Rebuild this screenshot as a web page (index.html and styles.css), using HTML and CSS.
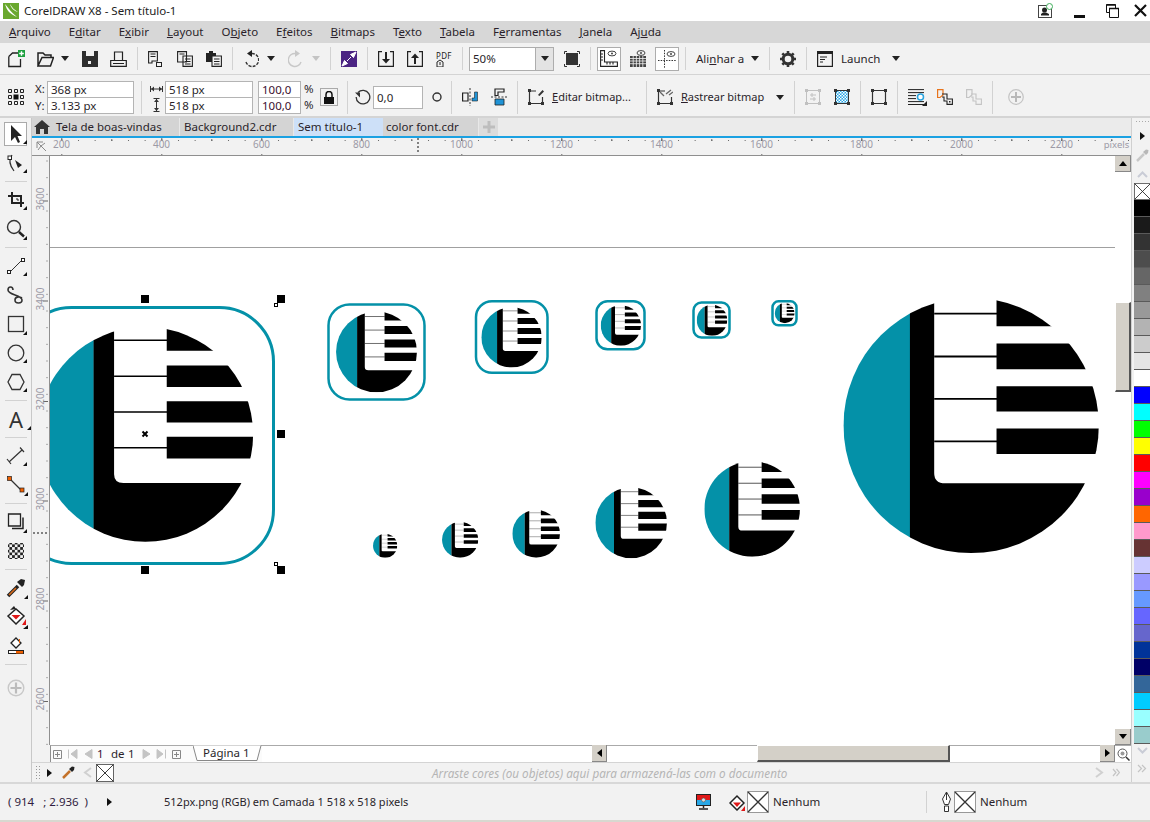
FILE: index.html
```html
<!DOCTYPE html>
<html lang="pt">
<head>
<meta charset="utf-8">
<title>CorelDRAW X8 - Sem título-1</title>
<link rel="stylesheet" href="styles.css">
</head>
<body>
<svg class="defs" width="0" height="0">
  <defs>
    <clipPath id="lc"><circle cx="128" cy="128" r="127.8"/></clipPath>
    <symbol id="logo" viewBox="0 0 256 256" preserveAspectRatio="none">
      <g clip-path="url(#lc)">
        <rect width="67" height="256" fill="#0491a8"/>
        <path d="M66.7 0H91V175.500Q91 185.900 102 185.900H256V256H66.7Z" fill="#000"/>
        <path d="M91 15.900H154M91 58.900H154M91 101.300H154M91 143.900H154" stroke="#000" stroke-width="1.800"/>
        <path d="M153.400 0H256V28.600H153.400ZM153.400 45.900H256V71.600H153.400ZM153.400 88.600H256V113.900H153.400ZM153.400 130.900H256V156.600H153.400Z" fill="#000"/>
      </g>
    </symbol>
    <symbol id="x-box" viewBox="0 0 20 20">
      <rect x=".5" y=".5" width="19" height="19" fill="#fff" stroke="#555"/>
      <path d="M1 1L19 19M19 1L1 19" stroke="#222" stroke-width="1"/>
    </symbol>
    <symbol id="fly" viewBox="0 0 8 5"><path d="M0 0H8L4 5Z" fill="#222"/></symbol>
    <symbol id="flyg" viewBox="0 0 8 5"><path d="M0 0H8L4 5Z" fill="#c4c4c4"/></symbol>
  </defs>
</svg>

<div class="app">
  <header class="titlebar">
    <svg class="app-icon" width="16" height="16" viewBox="0 0 16 16"><rect width="16" height="16" y="0" fill="#6aa82e"/><path d="M2 1C6 6 9 10 14 14C10 12 8 11 6 9C4 7 3 4 2 1ZM7 1C9 4 11 7 15 9C11 8 8 5 7 1Z" fill="#fff"/></svg>
    <span class="title-text">CorelDRAW X8 - Sem título-1</span>
    <div class="win-controls">
      <svg width="15" height="15" viewBox="0 0 15 15"><rect x=".5" y="2.5" width="13" height="12" fill="#fff" stroke="#444"/><circle cx="6.5" cy="7" r="2.5" fill="#222"/><path d="M3 12.5H11V11L8 9.5H5L3 11Z" fill="#222"/><circle cx="11.5" cy="3.5" r="3" fill="#fff" stroke="#3fae5a"/></svg>
      <svg class="m20" width="11" height="15" viewBox="0 0 11 15"><rect y="12" width="11" height="3" fill="#111"/></svg>
      <svg class="m21" width="13" height="15" viewBox="0 0 13 15"><path d="M.5 1.5H9.5V9.5H.5Z" fill="none" stroke="#111"/><path d="M3.5 5.5H12.5V14.5H3.5Z" fill="#fff" stroke="#111"/><path d="M3 5.5H13M.5 2H9.5" stroke="#111" stroke-width="1.6"/></svg>
      <svg class="m15" width="13" height="13" viewBox="0 0 13 13"><path d="M1 1L12 12M12 1L1 12" stroke="#111" stroke-width="2.2"/></svg>
    </div>
  </header>

  <nav class="menubar">
    <span><u>A</u>rquivo</span><span>E<u>d</u>itar</span><span>E<u>x</u>ibir</span><span><u>L</u>ayout</span><span>O<u>b</u>jeto</span><span>E<u>f</u>eitos</span><span><u>B</u>itmaps</span><span>T<u>e</u>xto</span><span><u>T</u>abela</span><span>F<u>e</u>rramentas</span><span><u>J</u>anela</span><span>Aj<u>u</u>da</span>
  </nav>

  <div class="bar toolbar">
    <svg class="m8" width="18" height="18" viewBox="0 0 18 18"><path d="M.8 6.5L4.5 3H10M.8 6.5V16.5H12.5V9" fill="none" stroke="#222" stroke-width="1.3"/><rect x="10" y="0" width="7" height="7" fill="#1d9f3e"/><path d="M13.5 1.2V5.8M11.2 3.5H15.8" stroke="#fff" stroke-width="1.4"/></svg>
    <svg class="m11" width="17" height="16" viewBox="0 0 17 16"><path d="M1 15V2H6L8 4H14V6.5H5L1 15H13.5L16.5 6.5H5" fill="none" stroke="#222" stroke-width="1.5"/></svg>
    <svg class="m7" width="8" height="5"><use href="#fly"/></svg>
    <svg class="m13" width="16" height="16" viewBox="0 0 16 16"><path d="M0 0H16V16H0Z" fill="#2e2e2e"/><rect x="4" y="0" width="8" height="5" fill="#f2f2f2"/><rect x="6" y="10" width="3" height="3" fill="#f2f2f2"/></svg>
    <svg class="m12" width="17" height="16" viewBox="0 0 17 16"><path d="M.7 15.3V9.5H4.5V1H12.5V9.5H16.3V15.3ZM4.5 9.5H12.5M3 12.5H14" fill="none" stroke="#222" stroke-width="1.2"/></svg>
    <i class="sep m10"></i>
    <svg class="m10" width="14" height="16" viewBox="0 0 14 16"><path d="M.6 .6H9.4V10H4V12H.6ZM2.5 3H7.5M2.5 5.5H7.5" fill="none" stroke="#222" stroke-width="1.1"/><rect x="8.5" y="11.5" width="5" height="4" fill="none" stroke="#222"/></svg>
    <svg class="m15" width="16" height="16" viewBox="0 0 16 16"><path d="M.6 .6H9.5V11H.6ZM6 5H15.4V15.4H6ZM2.5 3H7.5M8 8H13.5M8 10.5H13.5M8 13H13.5" fill="#f2f2f2" stroke="#222" stroke-width="1.1"/></svg>
    <svg class="m13" width="16" height="16" viewBox="0 0 16 16"><path d="M0 2H3V0H7V2H10V11H0Z" fill="#222"/><path d="M6 5H15.4V15.4H6ZM8 8H13.5M8 10.5H13.5M8 13H13.5" fill="#f2f2f2" stroke="#222" stroke-width="1.1"/></svg>
    <i class="sep m10"></i>
    <svg class="m10" width="16" height="18" viewBox="0 0 16 18"><path d="M3 12A6.5 6.5 0 1 0 8.5 3.5" fill="none" stroke="#333" stroke-width="1.4" stroke-dasharray="3 1.2"/><path d="M9 0V7L4 3.5Z" fill="#222"/></svg>
    <svg class="m8" width="8" height="5"><use href="#fly"/></svg>
    <svg class="m13" width="16" height="18" viewBox="0 0 16 18"><path d="M13 12A6.5 6.5 0 1 1 7.5 3.5" fill="none" stroke="#c8c8c8" stroke-width="1.4"/><path d="M7 0V7L12 3.5Z" fill="#c8c8c8"/></svg>
    <svg class="m8" width="8" height="5"><use href="#flyg"/></svg>
    <i class="sep m10"></i>
    <svg class="m10" width="16" height="16" viewBox="0 0 16 16"><rect width="16" height="16" fill="#4b2483"/><path d="M15 1L9.5 3.5L12.5 6.5ZM1 15L6.5 12.5L3.5 9.5ZM6 10L10 6" stroke="#fff" fill="#fff"/></svg>
    <i class="sep m10"></i>
    <svg class="m10" width="16" height="16" viewBox="0 0 16 16"><path d="M4 .6H.6V15.4H15.4V.6H12" fill="none" stroke="#222" stroke-width="1.2"/><path d="M8 1V8" stroke="#222" stroke-width="2"/><path d="M4 8H12L8 12.5Z" fill="#222"/></svg>
    <svg class="m13" width="16" height="16" viewBox="0 0 16 16"><path d="M4 .6H.6V15.4H15.4V.6H12" fill="none" stroke="#222" stroke-width="1.2"/><path d="M8 6V13" stroke="#222" stroke-width="2"/><path d="M4 7H12L8 2.5Z" fill="#222"/></svg>
    <svg class="m13" width="17" height="16" viewBox="0 0 17 16"><text class="pdf" x="0" y="8">PDF</text><path d="M1 16V11L4 9L7 11V16ZM4 11V14" fill="none" stroke="#222"/></svg>
    <i class="sep m9"></i>
    <div class="combo m6"><span class="combo-text">50%</span><span class="combo-btn"><svg width="8" height="5"><use href="#fly"/></svg></span></div>
    <svg class="m10" width="16" height="16" viewBox="0 0 16 16"><rect x="2" y="2" width="12" height="12" fill="#333"/><path d="M.5 3V.5H3M13 .5H15.5V3M15.5 13V15.5H13M3 15.5H.5V13" fill="none" stroke="#333"/></svg>
    <i class="sep m10"></i>
    <div class="toggle m6"><svg width="18" height="17" viewBox="0 0 18 17"><path d="M.6 .6H4.5V12H17.4V16.4H.6ZM.6 4H3M.6 7H3M.6 10H3M7 12V14.5M10 12V14.5M13 12V14.5" fill="none" stroke="#222" stroke-width="1.1"/><ellipse cx="12" cy="3.5" rx="4" ry="2.4" fill="none" stroke="#444"/><circle cx="12" cy="3.5" r="1" fill="#444"/></svg></div>
    <svg class="m9" width="16" height="17" viewBox="0 0 16 17"><path d="M0 6H16V17H0Z" fill="#444"/><path d="M0 8.5H16M0 11H16M0 13.7H16M3.2 6V17M6.4 6V17M9.6 6V17M12.8 6V17" stroke="#f2f2f2" stroke-width=".8"/><ellipse cx="11" cy="3" rx="4" ry="2.4" fill="none" stroke="#444"/><circle cx="11" cy="3" r="1" fill="#444"/></svg>
    <div class="toggle m9"><svg width="18" height="18" viewBox="0 0 18 18"><path d="M6.5 0V18M0 10.5H18" stroke="#333" stroke-dasharray="1.5 1.2"/><ellipse cx="13" cy="4" rx="4" ry="2.4" fill="none" stroke="#444"/><circle cx="13" cy="4" r="1" fill="#444"/></svg></div>
    <i class="sep m6"></i>
    <span class="label m10 w47">Ali<u>n</u>har a</span>
    <svg class="m8" width="8" height="5"><use href="#fly"/></svg>
    <i class="sep m10"></i>
    <svg class="m10" width="16" height="16" viewBox="0 0 16 16"><circle cx="8" cy="8" r="4.8" fill="none" stroke="#333" stroke-width="3"/><path d="M8 0V16M0 8H16M2.3 2.3L13.7 13.7M13.7 2.3L2.3 13.7" stroke="#333" stroke-width="2.6" stroke-dasharray="2.6 10.8 2.6 0"/></svg>
    <i class="sep m10"></i>
    <svg class="m10" width="16" height="16" viewBox="0 0 16 16"><rect x=".6" y=".6" width="14.8" height="14.8" fill="none" stroke="#222" stroke-width="1.2"/><rect y="0" width="16" height="3" fill="#222"/><path d="M3 6H10M3 8.5H8M3 11H6" stroke="#222"/></svg>
    <span class="label m8 w39">Launch</span>
    <svg class="m12" width="8" height="5"><use href="#fly"/></svg>
  </div>

  <div class="bar propbar">
    <svg class="m8" width="16" height="16" viewBox="0 0 16 16"><path d="M.5 .5H3.500V3.500H.5ZM6.500 .5H9.500V3.500H6.500ZM12.500 .5H15.500V3.500H12.500ZM.5 6.500H3.500V9.500H.5ZM12.500 6.500H15.500V9.500H12.500ZM.5 12.500H3.500V15.500H.5ZM6.500 12.500H9.500V15.500H6.500ZM12.500 12.500H15.500V15.500H12.500Z" fill="none" stroke="#222"/><rect x="5.500" y="5.500" width="5" height="5" fill="#111"/></svg>
    <div class="stack m11">
      <div class="field-row"><label class="axis">X:</label><span class="field w87">368 px</span></div>
      <div class="field-row"><label class="axis">Y:</label><span class="field w87">3.133 px</span></div>
    </div>
    <i class="sep tall m7"></i>
    <div class="stack icons m8">
      <svg width="13" height="16" viewBox="0 0 13 16"><path d="M.5 5V11M12.500 5V11M1 8H12" stroke="#333"/><path d="M1 8L4 5.500V10.500ZM12 8L9 5.500V10.500Z" fill="#333"/></svg>
      <svg width="13" height="16" viewBox="0 0 13 16"><path d="M3.500 1.500H9.500M3.500 14.500H9.500M6.500 2V14" stroke="#333"/><path d="M6.500 2L4 5H9ZM6.500 14L4 11H9Z" fill="#333"/></svg>
    </div>
    <div class="stack m2"><span class="field w88">518 px</span><span class="field w88">518 px</span></div>
    <div class="stack m5"><span class="field w43 num">100,0</span><span class="field w43 num">100,0</span></div>
    <div class="stack pct m3"><span>%</span><span>%</span></div>
    <span class="lock m6"><svg width="12" height="13" viewBox="0 0 12 13"><path d="M3 6V3.500A3 3 0 0 1 9 3.500V6" fill="none" stroke="#111" stroke-width="1.500"/><rect x="1" y="6" width="10" height="7" fill="#111"/></svg></span>
    <i class="sep tall m9"></i>
    <svg class="m7" width="16" height="16" viewBox="0 0 16 16"><path d="M3 3.500A6.800 6.800 0 1 1 1.200 8" fill="none" stroke="#333" stroke-width="1.300"/><path d="M0 3.500H5V8.500Z" fill="#333"/></svg>
    <span class="field rot m2">0,0</span>
    <svg class="m8" width="12" height="12" viewBox="0 0 12 12"><circle cx="6" cy="6" r="4" fill="none" stroke="#333" stroke-width="1.400"/></svg>
    <i class="sep tall m8"></i>
    <svg class="m10" width="16" height="18" viewBox="0 0 16 18"><path d="M8 0V18" stroke="#333" stroke-dasharray="2 1.500"/><path d="M.6 5H6V13H.6Z" fill="none" stroke="#222" stroke-width="1.200"/><path d="M10 13H15.500V4H12.500V10H10Z" fill="#1f93d6" stroke="#222" stroke-width=".6"/></svg>
    <svg class="m13" width="16" height="18" viewBox="0 0 16 18"><path d="M0 9H16" stroke="#333" stroke-dasharray="2 1.500"/><path d="M4 1H13V4H7V7.500H4Z" fill="none" stroke="#222" stroke-width="1.200"/><path d="M4 11V17H13V11Z" fill="#1f93d6" stroke="#222" stroke-width=".8"/></svg>
    <i class="sep tall m10"></i>
    <svg class="m10" width="16" height="16" viewBox="0 0 16 16"><path d="M1.500 2V14.500H14.500V8M1.500 2H8" fill="none" stroke="#333" stroke-width="1.200"/><path d="M0 0H3V3H0ZM0 13H3V16H0ZM13 13H16V16H13Z" fill="#333"/><path d="M10 6L14.500 1L16 2.500L11.500 7Z" fill="#333"/></svg>
    <span class="label small m8 w80"><u>E</u>ditar bitmap...</span>
    <i class="sep tall m14"></i>
    <svg class="m10" width="16" height="16" viewBox="0 0 16 16"><path d="M1.500 2V14.500H14.500V8M1.500 2H8" fill="none" stroke="#333" stroke-width="1.200"/><path d="M0 0H3V3H0ZM0 13H3V16H0ZM13 13H16V16H13Z" fill="#333"/><path d="M3 3L7 7M9 5L14 1M12 6L16 3" stroke="#666" stroke-width="1.300"/></svg>
    <span class="label small m8 w82"><u>R</u>astrear bitmap</span>
    <svg class="m13" width="8" height="5"><use href="#fly"/></svg>
    <i class="sep tall m10"></i>
    <svg class="m10" width="16" height="16" viewBox="0 0 16 16"><path d="M1.500 1.500H14.500V14.500H1.500Z" fill="none" stroke="#c0c0c0"/><path d="M0 0H3V3H0ZM13 0H16V3H13ZM0 13H3V16H0ZM13 13H16V16H13Z" fill="#c0c0c0"/><path d="M5 6H11M5 10H11M7 4V8M9 8V12" stroke="#c0c0c0"/></svg>
    <svg class="m13" width="16" height="16" viewBox="0 0 16 16"><defs><pattern id="chk" width="3" height="3" patternUnits="userSpaceOnUse"><rect width="3" height="3" fill="#28a8e8"/><rect width="1.500" height="1.500" fill="#fff"/><rect x="1.500" y="1.500" width="1.500" height="1.500" fill="#fff"/></pattern></defs><rect x="1.500" y="1.500" width="13" height="13" fill="url(#chk)" stroke="#333"/><path d="M0 0H3V3H0ZM13 0H16V3H13ZM0 13H3V16H0ZM13 13H16V16H13Z" fill="#333"/></svg>
    <i class="sep tall m10"></i>
    <svg class="m10" width="16" height="16" viewBox="0 0 16 16"><path d="M1.500 1.500H14.500V14.500H1.500Z" fill="none" stroke="#333" stroke-width="1.200"/><path d="M0 0H3V3H0ZM13 0H16V3H13ZM0 13H3V16H0ZM13 13H16V16H13Z" fill="#333"/></svg>
    <i class="sep tall m10"></i>
    <svg class="m10" width="19" height="17" viewBox="0 0 19 17"><path d="M0 .6H16M0 3.600H16M0 6.600H8M0 9.600H8M0 12.600H16M0 15.500H16" stroke="#222"/><circle cx="12.500" cy="8" r="3" fill="#fff" stroke="#2aa5e0" stroke-width="1.500"/><path d="M19 12V17H14Z" fill="#222"/></svg>
    <svg class="m10" width="16" height="16" viewBox="0 0 16 16"><path d="M.6 .6H6V6L3 8.500H.6Z" fill="none" stroke="#e8741c" stroke-width="1.200"/><path d="M5 5H10V10H15.400V15.400H10V12H7V8H5" fill="none" stroke="#222" stroke-width="1.100"/><rect x="12" y="12" width="1.500" height="1.500" fill="#222"/></svg>
    <svg class="m13" width="16" height="16" viewBox="0 0 16 16"><path d="M.6 .6H6V6L3 8.500H.6Z" fill="none" stroke="#c4c4c4" stroke-width="1.200"/><path d="M5 5H10V10H15.400V15.400H10V12H7V8H5" fill="none" stroke="#c4c4c4" stroke-width="1.100"/></svg>
    <i class="sep tall m10"></i>
    <svg class="m15" width="16" height="16" viewBox="0 0 16 16"><circle cx="8" cy="8" r="7.300" fill="none" stroke="#c4c4c4" stroke-width="1.200"/><path d="M8 3V13M3 8H13" stroke="#b8b8b8" stroke-width="2"/></svg>
  </div>

  <div class="workspace">
    <aside class="toolbox">
      <div class="tool selected"><svg width="22" height="22" viewBox="1 1 22 22"><path d="M7 3V19L11 15L14 21L16 20L13.500 14H18Z" fill="#222"/><path d="M19 22H23V18Z" fill="#111"/></svg></div>
      <div class="tool"><svg width="24" height="24" viewBox="0 0 24 24"><path d="M8 4Q3 11 10 20" fill="none" stroke="#333" stroke-width="1.200"/><rect x="4" y="5" width="3.500" height="3.500" fill="#fff" stroke="#222"/><path d="M11 9L18 14L14 17Z" fill="#222"/><path d="M19 22H23V18Z" fill="#111"/></svg></div>
      <i class="hsep"></i>
      <div class="tool"><svg width="24" height="24" viewBox="0 0 24 24"><path d="M4 8H17V19M8 4V15H20" fill="none" stroke="#222" stroke-width="2"/><path d="M12 11H14V13" stroke="#222" fill="none"/><path d="M19 22H23V18Z" fill="#111"/></svg></div>
      <div class="tool"><svg width="24" height="24" viewBox="0 0 24 24"><circle cx="10" cy="10" r="6.500" fill="none" stroke="#333" stroke-width="1.400"/><path d="M15 15L20 19.500" stroke="#222" stroke-width="2.400"/><path d="M19 23H23V19Z" fill="#111"/></svg></div>
      <i class="hsep"></i>
      <div class="tool"><svg width="24" height="24" viewBox="0 0 24 24"><path d="M6 18L18 6" stroke="#333"/><rect x="3.500" y="16.500" width="3" height="3" fill="#fff" stroke="#222"/><rect x="17.500" y="4.500" width="3" height="3" fill="#fff" stroke="#222"/><path d="M19 22H23V18Z" fill="#111"/></svg></div>
      <div class="tool"><svg width="24" height="24" viewBox="0 0 24 24"><path d="M9 7C9 3 4 3 4 7C4 12 18 12 18 17C18 21 11 21 11 17C11 14 15 13 18 15" fill="none" stroke="#333" stroke-width="1.600"/></svg></div>
      <div class="tool"><svg width="24" height="24" viewBox="0 0 24 24"><rect x="4.500" y="4.500" width="15" height="15" fill="none" stroke="#333" stroke-width="1.300"/><path d="M19 23H23V19Z" fill="#111"/></svg></div>
      <div class="tool"><svg width="24" height="24" viewBox="0 0 24 24"><circle cx="12" cy="12" r="7.800" fill="none" stroke="#333" stroke-width="1.300"/><path d="M19 22H23V18Z" fill="#111"/></svg></div>
      <div class="tool"><svg width="24" height="24" viewBox="0 0 24 24"><path d="M8 4.500H16L20 12L16 19.500H8L4 12Z" fill="none" stroke="#333" stroke-width="1.300"/><path d="M19 22H23V18Z" fill="#111"/></svg></div>
      <i class="hsep"></i>
      <div class="tool"><span class="tool-a">A</span><svg class="corner" width="4" height="4" viewBox="0 0 4 4"><path d="M0 4H4V0Z" fill="#111"/></svg></div>
      <i class="hsep"></i>
      <div class="tool"><svg width="24" height="24" viewBox="0 0 24 24"><path d="M5 18L18 6M3 15L7 20M16 3.500L20 8" fill="none" stroke="#333" stroke-width="1.200"/><path d="M19 22H23V18Z" fill="#111"/></svg></div>
      <div class="tool"><svg width="24" height="24" viewBox="0 0 24 24"><path d="M6 6L18 18" stroke="#333" stroke-width="1.200"/><rect x="3.500" y="3.500" width="4" height="4" fill="#f06000" stroke="#222" stroke-width=".7"/><rect x="16" y="15" width="4" height="4" fill="#f06000" stroke="#222" stroke-width=".7"/><path d="M20 23H24V19Z" fill="#111"/></svg></div>
      <i class="hsep"></i>
      <div class="tool"><svg width="24" height="24" viewBox="0 0 24 24"><path d="M4.500 4H16.500V16H4.500Z" fill="none" stroke="#222" stroke-width="1.300"/><path d="M8 18.500H19V7.500" fill="none" stroke="#222" stroke-width="1.500"/><path d="M19 23H23V19Z" fill="#111"/></svg></div>
      <div class="tool"><svg width="24" height="24" viewBox="0 0 24 24"><defs><pattern id="chk2" width="5.400" height="5.400" patternUnits="userSpaceOnUse"><rect width="5.400" height="5.400" fill="#222"/><rect width="2.700" height="2.700" fill="#f2f2f2"/><rect x="2.700" y="2.700" width="2.700" height="2.700" fill="#f2f2f2"/></pattern></defs><rect x="4" y="4" width="16" height="16" fill="url(#chk2)"/></svg></div>
      <i class="hsep"></i>
      <div class="tool"><svg width="24" height="24" viewBox="0 0 24 24"><path d="M4 20L14 10" stroke="#222" stroke-width="3.600"/><path d="M5 19L12 12" stroke="#d96a1a" stroke-width="1.600"/><path d="M13 6L18 11L20 9L21 4L17 3Z" fill="#222"/><path d="M20 23H24V19Z" fill="#111"/></svg></div>
      <div class="tool"><svg width="24" height="24" viewBox="0 0 24 24"><path d="M4 11L12 4L20 11L12 19Z" fill="#fff" stroke="#222" stroke-width="1.500"/><path d="M7.500 10H16.500L12 14.500Z" fill="#e01818"/><path d="M6 5L10 1L12 4" fill="#222"/><path d="M18 20H22V14Z" fill="#e01818"/><path d="M19 24H24V20Z" fill="#111"/></svg></div>
      <div class="tool"><svg width="24" height="24" viewBox="0 0 24 24"><path d="M7 9L12 4L17 9L12 14Z" fill="#fff" stroke="#222" stroke-width="1.300"/><path d="M15.500 5V9" stroke="#f06000"/><rect x="4.500" y="16.500" width="15" height="3" fill="#fff" stroke="#222"/><rect x="12" y="17" width="7" height="2.500" fill="#f06000"/></svg></div>
      <i class="hsep"></i>
      <div class="tool plus"><svg width="18" height="18" viewBox="0 0 18 18"><circle cx="9" cy="9" r="7.800" fill="none" stroke="#c8c8c8" stroke-width="1.400"/><path d="M9 3.500V14.500M3.500 9H14.500" stroke="#bcbcbc" stroke-width="2.200"/></svg></div>
    </aside>

    <section class="docarea">
      <div class="tabs">
        <div class="tab home"><svg width="16" height="14" viewBox="0 0 16 14"><path d="M8 0L16 7H14V14H10V9H6V14H2V7H0Z" fill="#333"/></svg><span>Tela de boas-vindas</span></div>
        <div class="tab bg2">Background2.cdr</div>
        <div class="tab active">Sem título-1</div>
        <div class="tab color">color font.cdr</div>
        <div class="tab add"><svg width="12" height="12" viewBox="0 0 12 12"><path d="M6 0V12M0 6H12" stroke="#bdbdbd" stroke-width="3"/></svg></div>
      </div>
      <svg class="ruler-top" width="1099" height="18" viewBox="32 138 1099 18">
        <defs>
          <pattern id="rt" x="11.300" y="0" width="16.667" height="18" patternUnits="userSpaceOnUse"><rect x="0" y="14" width="1" height="1" fill="#666"/></pattern>
          <pattern id="rt2" x="11.300" y="0" width="50" height="18" patternUnits="userSpaceOnUse"><rect x="0" y="13" width="1" height="2" fill="#666"/></pattern>
          <pattern id="rt3" x="61.300" y="0" width="100" height="18" patternUnits="userSpaceOnUse"><rect x="0" y="10" width="1" height="5" fill="#666"/></pattern>
        </defs>
        <rect x="32" y="138" width="1099" height="18" fill="#f2f2f2"/>
        <rect x="50" y="138" width="1081" height="18" fill="url(#rt)"/>
        <rect x="50" y="138" width="1081" height="18" fill="url(#rt2)"/>
        <rect x="50" y="138" width="1081" height="18" fill="url(#rt3)"/>
        <rect x="32" y="155" width="1099" height="1" fill="#8f8f8f"/>
        <path d="M37 142H43M37 142V148M37 142L46 151M41 146L38 150M41 146L45 143" stroke="#8a8a8a" fill="none"/>
        <path d="M418 138V154" stroke="#111" stroke-dasharray="2 2"/>
        <g class="rl">
          <text x="61.500" y="148">200</text><text x="161.500" y="148">400</text><text x="261.500" y="148">600</text><text x="361.500" y="148">800</text><text x="461.500" y="148">1000</text><text x="561.500" y="148">1200</text><text x="661.500" y="148">1400</text><text x="761.500" y="148">1600</text><text x="861.500" y="148">1800</text><text x="961.500" y="148">2000</text><text x="1061.500" y="148">2200</text><text class="rl-unit" x="1116.500" y="148">pixels</text>
        </g>
      </svg>
      <div class="main-row">
        <svg class="ruler-left" width="18" height="589" viewBox="32 156 18 589">
          <rect x="32" y="156" width="18" height="589" fill="#f2f2f2"/>
          <path d="M47 160.500V745" stroke="#666" stroke-dasharray="1 15.667"/>
          <path d="M43 201H48M43 301H48M43 401.500H48M43 501H48M43 601H48M43 701.500H48" stroke="#666"/>
          <rect x="49" y="156" width="1" height="589" fill="#8f8f8f"/>
          <path d="M33 533H49" stroke="#111" stroke-dasharray="2 2"/>
          <g class="rl">
            <text transform="translate(44 199) rotate(-90)">3600</text>
            <text transform="translate(44 299) rotate(-90)">3400</text>
            <text transform="translate(44 399) rotate(-90)">3200</text>
            <text transform="translate(44 499) rotate(-90)">3000</text>
            <text transform="translate(44 599) rotate(-90)">2800</text>
            <text transform="translate(44 699) rotate(-90)">2600</text>
          </g>
        </svg>
        <svg class="canvas" width="1065" height="589" viewBox="50 156 1065 589">
          <rect x="50" y="156" width="1065" height="589" fill="#fff"/>
          <path d="M50 247.500H1115" stroke="#a0a0a0"/>

          <rect class="frame f3" x="17.500" y="307.500" width="256" height="256" rx="54"/>
          <use href="#logo" x="37.300" y="326.800" width="216" height="215.200"/>

          <rect class="frame" x="328.500" y="304.500" width="96" height="95" rx="21"/>
          <use href="#logo" x="336" y="311.500" width="81" height="80.800"/>
          <rect class="frame" x="476" y="301.300" width="71.500" height="71.500" rx="16"/>
          <use href="#logo" x="481.300" y="307.100" width="60.500" height="60.400"/>
          <rect class="frame" x="596.500" y="301.300" width="48" height="48" rx="11"/>
          <use href="#logo" x="600.700" y="305.300" width="40.300" height="40.400"/>
          <rect class="frame" x="693.500" y="302.500" width="36" height="35" rx="8"/>
          <use href="#logo" x="696.700" y="304.700" width="30.600" height="31"/>
          <rect class="frame" x="772.500" y="301.300" width="24" height="24" rx="6"/>
          <use href="#logo" x="774.700" y="303.100" width="20" height="20.200"/>

          <use href="#logo" x="373" y="533.700" width="24.300" height="24"/>
          <use href="#logo" x="442" y="521.900" width="36.300" height="35.800"/>
          <use href="#logo" x="512.300" y="509.800" width="47.700" height="47.900"/>
          <use href="#logo" x="595.300" y="487.300" width="71.700" height="71"/>
          <use href="#logo" x="704.300" y="461.300" width="95.700" height="95.400"/>
          <use href="#logo" x="843.300" y="297.700" width="255.700" height="255.600"/>

          <g fill="#000">
            <rect x="141" y="295" width="8" height="8"/><rect x="277" y="295" width="8" height="8"/>
            <rect x="277" y="430" width="8" height="8"/><rect x="141" y="566" width="8" height="8"/>
            <rect x="277" y="566" width="8" height="8"/>
          </g>
          <g fill="#fff" stroke="#000"><rect x="274.500" y="303.500" width="3" height="3"/><rect x="274.500" y="562.500" width="3" height="3"/></g>
          <path d="M142.500 431.500L147.500 436.500M147.500 431.500L142.500 436.500" stroke="#000" stroke-width="2"/>
        </svg>
        <div class="vscroll">
          <button class="sb-btn v"><svg width="8" height="5" viewBox="0 0 8 5"><path d="M0 5H8L4 0Z" fill="#000"/></svg></button>
          <div class="v-track"><div class="v-thumb"></div></div>
          <button class="sb-btn v"><svg width="8" height="5"><path d="M0 0H8L4 5Z" fill="#000"/></svg></button>
        </div>
      </div>
      <div class="pagebar">
        <div class="page-nav">
          <svg width="46" height="14" viewBox="0 0 46 14"><path d="M2.500 3.500H10.500V11.500H2.500ZM6.500 5V10M4 7.500H9" fill="none" stroke="#888"/><path d="M17.500 2.500V11.500M26 2.500L20 7L26 11.500ZM41 2.500L34 7L41 11.500Z" fill="#c4c4c4" stroke="#c4c4c4"/></svg>
          <span class="page-num">1</span><span class="page-de">de</span><span class="page-tot">1</span>
          <svg width="50" height="14" viewBox="0 0 50 14"><path d="M6 2.500L13 7L6 11.500ZM20 2.500L26 7L20 11.500ZM28.500 2.500V11.500" fill="#c4c4c4" stroke="#c4c4c4"/><path d="M35.500 3.500H43.500V11.500H35.500ZM39.500 5V10M37 7.500H42" fill="none" stroke="#888"/></svg>
        </div>
        <div class="page-tab"><svg class="page-tab-shape" width="69" height="17" viewBox="0 0 69 17"><path d="M0 0.500L4 15.500H64L68 0.500" fill="#fff" stroke="#888"/></svg><span class="page-tab-text">Página 1</span></div>
        <div class="hscroll">
          <button class="sb-btn h"><svg width="5" height="8"><path d="M5 0V8L0 4Z" fill="#000"/></svg></button>
          <div class="h-track"><div class="h-thumb"></div></div>
          <button class="sb-btn h"><svg width="5" height="8"><path d="M0 0V8L5 4Z" fill="#000"/></svg></button>
          <span class="zoom-corner"><svg width="13" height="13" viewBox="0 0 13 13"><circle cx="5.500" cy="5.500" r="4.500" fill="none" stroke="#555"/><circle cx="5.500" cy="5.500" r="2" fill="#999"/><path d="M9 9L12.500 12.500" stroke="#333" stroke-width="1.500"/></svg></span>
        </div>
      </div>
      <div class="docpal">
        <i class="grip"></i>
        <svg class="m7" width="5" height="8"><path d="M0 0V8L5 4Z" fill="#111"/></svg>
        <svg class="m10" width="13" height="13" viewBox="0 0 13 13"><path d="M1 12L8 5" stroke="#c4722a" stroke-width="2.500"/><path d="M7 3L10 6L12 4L12.500 1L10 .5Z" fill="#222"/></svg>
        <svg class="m8" width="10" height="11" viewBox="0 0 10 11"><path d="M8 1L2 5.500L8 10" fill="none" stroke="#d0d0d0" stroke-width="2"/></svg>
        <svg class="m3" width="18" height="18"><use href="#x-box" width="18" height="18"/></svg>
        <span class="hint">Arraste cores (ou objetos) aqui para armazená-las com o documento</span>
        <svg class="hint-a" width="10" height="11" viewBox="0 0 10 11"><path d="M2 1L8 5.500L2 10" fill="none" stroke="#d0d0d0" stroke-width="2"/></svg>
        <svg class="m8" width="8" height="9" viewBox="0 0 8 9"><path d="M1 1L4 4.500L1 8M4.500 1L7.500 4.500L4.500 8" fill="none" stroke="#c4c4c4" stroke-width="1.200"/></svg>
      </div>
    </section>

    <aside class="palette">
      <div class="pal-head">
        <i class="pal-grip"></i>
        <svg width="5" height="8"><path d="M0 0V8L5 4Z" fill="#111"/></svg>
        <svg width="13" height="13" viewBox="0 0 13 13"><path d="M1 12L8 5" stroke="#c8c8c8" stroke-width="2.500"/><path d="M7 3L10 6L12 4L12.500 1L10 .5Z" fill="#b8b8b8"/></svg>
        <svg width="11" height="7" viewBox="0 0 11 7"><path d="M1 6L5.500 1.500L10 6" fill="none" stroke="#c9ccd6" stroke-width="2"/></svg>
      </div>
      <svg class="pal-x" width="17" height="17"><use href="#x-box" width="17" height="17"/></svg>
      <div class="swatches">
        <i class="c01"></i><i class="c02"></i><i class="c03"></i><i class="c04"></i><i class="c05"></i><i class="c06"></i><i class="c07"></i><i class="c08"></i><i class="c09"></i><i class="c10"></i><i class="c11"></i><i class="c12"></i><i class="c13"></i><i class="c14"></i><i class="c15"></i><i class="c16"></i><i class="c17"></i><i class="c18"></i><i class="c19"></i><i class="c20"></i><i class="c21"></i><i class="c22"></i><i class="c23"></i><i class="c24"></i><i class="c25"></i><i class="c26"></i><i class="c27"></i><i class="c28"></i><i class="c29"></i><i class="c30"></i><i class="c31"></i><i class="c32"></i>
      </div>
      <div class="pal-foot">
        <svg width="11" height="7" viewBox="0 0 11 7"><path d="M1 1L5.500 5.500L10 1" fill="none" stroke="#c9ccd6" stroke-width="2"/></svg>
        <svg width="10" height="9" viewBox="0 0 10 9"><path d="M1 1L4.500 4.500L1 8M5 1L8.500 4.500L5 8" fill="none" stroke="#c4c4c4" stroke-width="1.200"/></svg>
      </div>
    </aside>
  </div>

  <footer class="statusbar">
    <span class="coords">( 914 &nbsp; ; 2.936 &nbsp;)</span>
    <svg class="st-arrow" width="5" height="8"><path d="M0 0V8L5 4Z" fill="#111"/></svg>
    <span class="st-info">512px.png (RGB) em Camada 1 518 x 518 pixels</span>
    <svg width="15" height="17" viewBox="0 0 15 17"><rect width="15" height="12" fill="#222"/><rect x="1" y="1" width="13" height="5" fill="#e01818"/><rect x="1" y="6" width="13" height="5" fill="#28a8e8"/><circle cx="7.500" cy="6" r="2" fill="#ddd" stroke="#555" stroke-width=".6"/><path d="M7.500 12V14M3 15H12" stroke="#222" stroke-width="1.500"/></svg>
    <svg class="st-fill" width="16" height="17" viewBox="0 0 16 17"><path d="M1 9L8 2L15 9L8 16Z" fill="#fff" stroke="#222" stroke-width="1.500"/><path d="M4 8.500H12L8 13Z" fill="#e01818"/><path d="M12 17H16V12Z" fill="#e01818"/></svg>
    <svg class="m2" width="22" height="22" viewBox="0 0 22 22"><rect x=".5" y=".5" width="21" height="21" fill="#fff" stroke="#999"/><path d="M1 1L21 21M21 1L1 21" stroke="#333" stroke-width="1.300"/></svg>
    <span class="st-nen">Nenhum</span>
    <i class="st-sep"></i>
    <svg class="m15" width="9" height="20" viewBox="0 0 9 20"><path d="M4.500 0L8.500 7L6.500 12.500H2.500L.5 7ZM4.500 0V8M2.500 14H6.500V19.500H2.500Z" fill="#fff" stroke="#333"/></svg>
    <svg class="m3" width="22" height="22" viewBox="0 0 22 22"><rect x=".5" y=".5" width="21" height="21" fill="#fff" stroke="#999"/><path d="M1 1L21 21M21 1L1 21" stroke="#333" stroke-width="1.300"/></svg>
    <span class="st-nen">Nenhum</span>
  </footer>
</div>
</body>
</html>
```

FILE: styles.css
```css
* { box-sizing: border-box; }
html, body { margin: 0; padding: 0; background: #f2f2f2; }
body { font: 11.500px/16px "Noto Sans", "Open Sans", sans-serif; color: #2a1f2a; overflow: hidden; }
svg { display: block; flex: none; }
.defs { position: absolute; }
.app { width: 1150px; height: 822px; display: flex; flex-direction: column; overflow: hidden; }

.titlebar { height: 21px; background: #fff; display: flex; align-items: center; padding-left: 3px; }
.title-text { margin-left: 5px; white-space: nowrap; color: #222; }
.win-controls { margin-left: auto; padding-right: 3px; display: flex; align-items: center; }

.menubar { height: 22px; background: #d7d7d7; display: flex; align-items: center; gap: 18px; padding-left: 9px; white-space: nowrap; }

.bar { display: flex; align-items: center; background: #f2f2f2; border-bottom: 1px solid #d4d4d4; white-space: nowrap; }
.toolbar { height: 32px; }
.propbar { height: 43px; padding-top: 3px; border-bottom: 2px solid #d4d4d4; }

.sep { display: block; flex: none; width: 1px; height: 23px; background: #d2d2d2; }
.sep.tall { height: 33px; }

.m2 { margin-left: 2px; } .m3 { margin-left: 3px; } .m5 { margin-left: 5px; } .m6 { margin-left: 6px; }
.m7 { margin-left: 7px; } .m8 { margin-left: 8px; } .m9 { margin-left: 9px; } .m10 { margin-left: 10px; }
.m11 { margin-left: 11px; } .m12 { margin-left: 12px; } .m13 { margin-left: 13px; } .m14 { margin-left: 14px; }
.m15 { margin-left: 15px; } .m20 { margin-left: 21px; } .m21 { margin-left: 21px; }

.label { display: block; flex: none; }
.label.small { font-size: 11px; }
.w39 { width: 39px; } .w47 { width: 47px; } .w80 { width: 80px; } .w82 { width: 82px; }

.pdf { font-size: 8px; fill: #222; letter-spacing: .3px; }

.combo { width: 85px; height: 24px; display: flex; border: 1px solid #adadad; background: #fff; }
.combo-text { flex: 1; padding-left: 3px; line-height: 22px; }
.combo-btn { width: 18px; background: #e3e3e3; border-left: 1px solid #adadad; display: flex; align-items: center; justify-content: center; }
.toggle { width: 24px; height: 24px; flex: none; background: #fff; border: 1px solid #adadad; display: flex; align-items: center; justify-content: center; }

.stack { display: flex; flex-direction: column; flex: none; }
.field-row { display: flex; align-items: center; }
.axis { width: 12px; }
.field { display: block; height: 17px; margin-top: -1px; background: #fff; border: 1px solid #b4b4b4; padding-left: 3px; line-height: 15px; }
.stack .field:first-child, .field-row:first-child .field { margin-top: 0; }
.w87 { width: 87px; } .w88 { width: 88px; } .w43 { width: 43px; }
.num { color: #3a1030; }
.pct { width: 10px; height: 33px; line-height: 16.500px; }
.lock { width: 18px; height: 18px; flex: none; display: flex; align-items: center; justify-content: center; border: 1px solid #aaa; }
.rot { width: 50px; height: 23px; margin-top: 0; line-height: 21px; }

.workspace { flex: 1; display: flex; min-height: 0; }
.toolbox { width: 32px; border-right: 1px solid #c8c8c8; padding-top: 4px; display: flex; flex-direction: column; align-items: flex-start; background: #f2f2f2; }
.tool { width: 24px; height: 29px; margin-left: 4px; display: flex; align-items: center; justify-content: center; position: relative; flex: none; }
.tool.selected { width: 23px; height: 24px; margin: 0 0 2.500px 4px; background: #fff; border: 1px solid #aaa; }
.tool.plus { margin-top: 5px; }
.tool-a { font-size: 22px; line-height: 29px; color: #333; }
.corner { position: absolute; right: -3px; bottom: 4px; }
.hsep { display: block; flex: none; width: 22px; height: 1px; margin: 3.500px 0 3.500px 5px; background: #d2d2d2; }

.docarea { flex: 1; min-width: 0; display: flex; flex-direction: column; }
.tabs { height: 20px; display: flex; background: #ebebeb; border-bottom: 2px solid #1ba1e2; line-height: 18px; white-space: nowrap; flex: none; }
.tab { height: 18px; background: #d4d4d4; border-right: 1px solid #e8e8e8; flex: none; }
.tab.home { width: 148px; display: flex; align-items: center; padding-left: 2px; }
.tab.home span { margin-left: 6px; }
.tab.bg2 { width: 114px; padding-left: 4px; }
.tab.active { width: 89px; padding-left: 4px; background: #cde0f8; border-right: 0; }
.tab.color { width: 96px; padding-left: 3px; }
.tab.add { width: 19px; display: flex; align-items: center; justify-content: center; background: #dcdcdc; border: 0; }

.rl text { font-size: 10px; fill: #9c9aa6; text-anchor: middle; }
.rl .rl-unit { font-size: 9.500px; }

.main-row { display: flex; height: 589px; flex: none; }
.canvas { flex: none; }
.frame { fill: #fff; stroke: #0491a8; stroke-width: 2.500; }
.frame.f3 { stroke-width: 3; }

.vscroll { width: 16px; flex: none; display: flex; flex-direction: column; }
.sb-btn { padding: 0; margin: 0; background: #d4d0c8; border: 0; border-right: 1px solid #888; border-bottom: 1px solid #888; display: flex; align-items: center; justify-content: center; flex: none; }
.sb-btn.v { width: 16px; height: 16px; }
.sb-btn.h { width: 15px; height: 17px; }
.v-track { flex: 1; background: #fff; padding-top: 130px; }
.v-thumb { width: 16px; height: 90px; background: #d4d0c8; border: 1px solid #fff; border-right: 2px solid #555; border-bottom: 2px solid #555; }

.pagebar { height: 17px; flex: none; display: flex; background: #f2f2f2; padding-left: 18px; }
.page-nav { width: 143px; height: 17px; background: #fbfbfb; border-top: 1px solid #aaa; border-left: 1px solid #8f8f8f; display: flex; align-items: center; flex: none; }
.page-num { width: 14px; flex: none; color: #3a1030; }
.page-de { width: 17px; flex: none; }
.page-tot { width: 9px; flex: none; }
.page-tab { width: 69px; height: 17px; background: #fbfbfb; border-top: 1px solid #aaa; position: relative; flex: none; }
.page-tab-shape { position: absolute; left: 0; top: -1px; }
.page-tab-text { position: relative; display: block; margin-left: 10px; line-height: 14px; }
.hscroll { flex: 1; display: flex; background: #fff; border-top: 1px solid #aaa; padding-left: 330px; height: 17px; }
.hscroll .sb-btn.h { margin-top: -1px; }
.h-track { flex: 1; padding-left: 150px; }
.h-thumb { width: 193px; height: 17px; margin-top: -1px; background: #d4d0c8; border: 1px solid #fff; border-right: 2px solid #555; border-bottom: 2px solid #555; }
.zoom-corner { width: 16px; display: flex; align-items: center; justify-content: center; background: #fff; }

.docpal { height: 20px; flex: none; display: flex; align-items: center; background: #f2f2f2; border-top: 1px solid #d4d4d4; padding-left: 3px; }
.grip { display: block; width: 5px; height: 16px; background: radial-gradient(circle, #999 .7px, transparent .8px) 0 0/3px 3px; }
.hint { margin-left: 318px; width: 358px; font-style: italic; font-size: 11.700px; color: #b5b5b5; white-space: nowrap; }
.hint-a { margin-left: 304px; }

.palette { width: 19px; flex: none; border-left: 1px solid #d0d0d0; background: #f2f2f2; padding-left: 1px; display: flex; flex-direction: column; }
.pal-head { height: 65px; display: flex; flex-direction: column; align-items: center; gap: 9px; padding-top: 2px; margin-left: 1px; }
.pal-grip { display: block; width: 15px; height: 3px; flex: none; background: radial-gradient(circle, #aaa .7px, transparent .8px) 0 0/3px 3px; }
.pal-x { margin-left: 1px; }
.swatches { display: flex; flex-direction: column; margin-left: 1px; }
.swatches i { display: block; width: 16px; height: 17px; border-bottom: 1px solid #5a5a5a; }
.c01 { background: #000; } .c02 { background: #1a1a1a; } .c03 { background: #333; } .c04 { background: #4d4d4d; }
.c05 { background: #666; } .c06 { background: #808080; } .c07 { background: #999; } .c08 { background: #b3b3b3; }
.c09 { background: #ccc; } .c10 { background: #e5e5e5; } .c11 { background: #fff; } .c12 { background: #00f; }
.c13 { background: #0ff; } .c14 { background: #0f0; } .c15 { background: #ff0; } .c16 { background: #f00; }
.c17 { background: #f0f; } .c18 { background: #90c; } .c19 { background: #f60; } .c20 { background: #f9c; }
.c21 { background: #633; } .c22 { background: #ccf; } .c23 { background: #99f; } .c24 { background: #69f; }
.c25 { background: #66f; } .c26 { background: #66c; } .c27 { background: #039; } .c28 { background: #006; }
.c29 { background: #369; } .c30 { background: #0cf; } .c31 { background: #9ff; } .c32 { background: #9cc; }
.pal-foot { display: flex; flex-direction: column; align-items: center; gap: 10px; padding-top: 3px; margin-left: 1px; }

.statusbar { height: 40px; flex: none; display: flex; align-items: center; background: #f2f2f2; border-top: 2px solid #d8d8d8; border-bottom: 2px solid #d8d8d0; padding-left: 8px; white-space: nowrap; }
.coords { width: 97px; flex: none; color: #301c40; }
.st-arrow { margin-left: 2px; }
.st-info { margin-left: 52px; width: 532px; flex: none; font-size: 11px; }
.st-fill { margin-left: 18px; }
.st-nen { margin-left: 4px; width: 48px; flex: none; }
.st-sep { display: block; flex: none; width: 1px; height: 22px; margin-left: 105px; background: #d2d2d2; }
```
